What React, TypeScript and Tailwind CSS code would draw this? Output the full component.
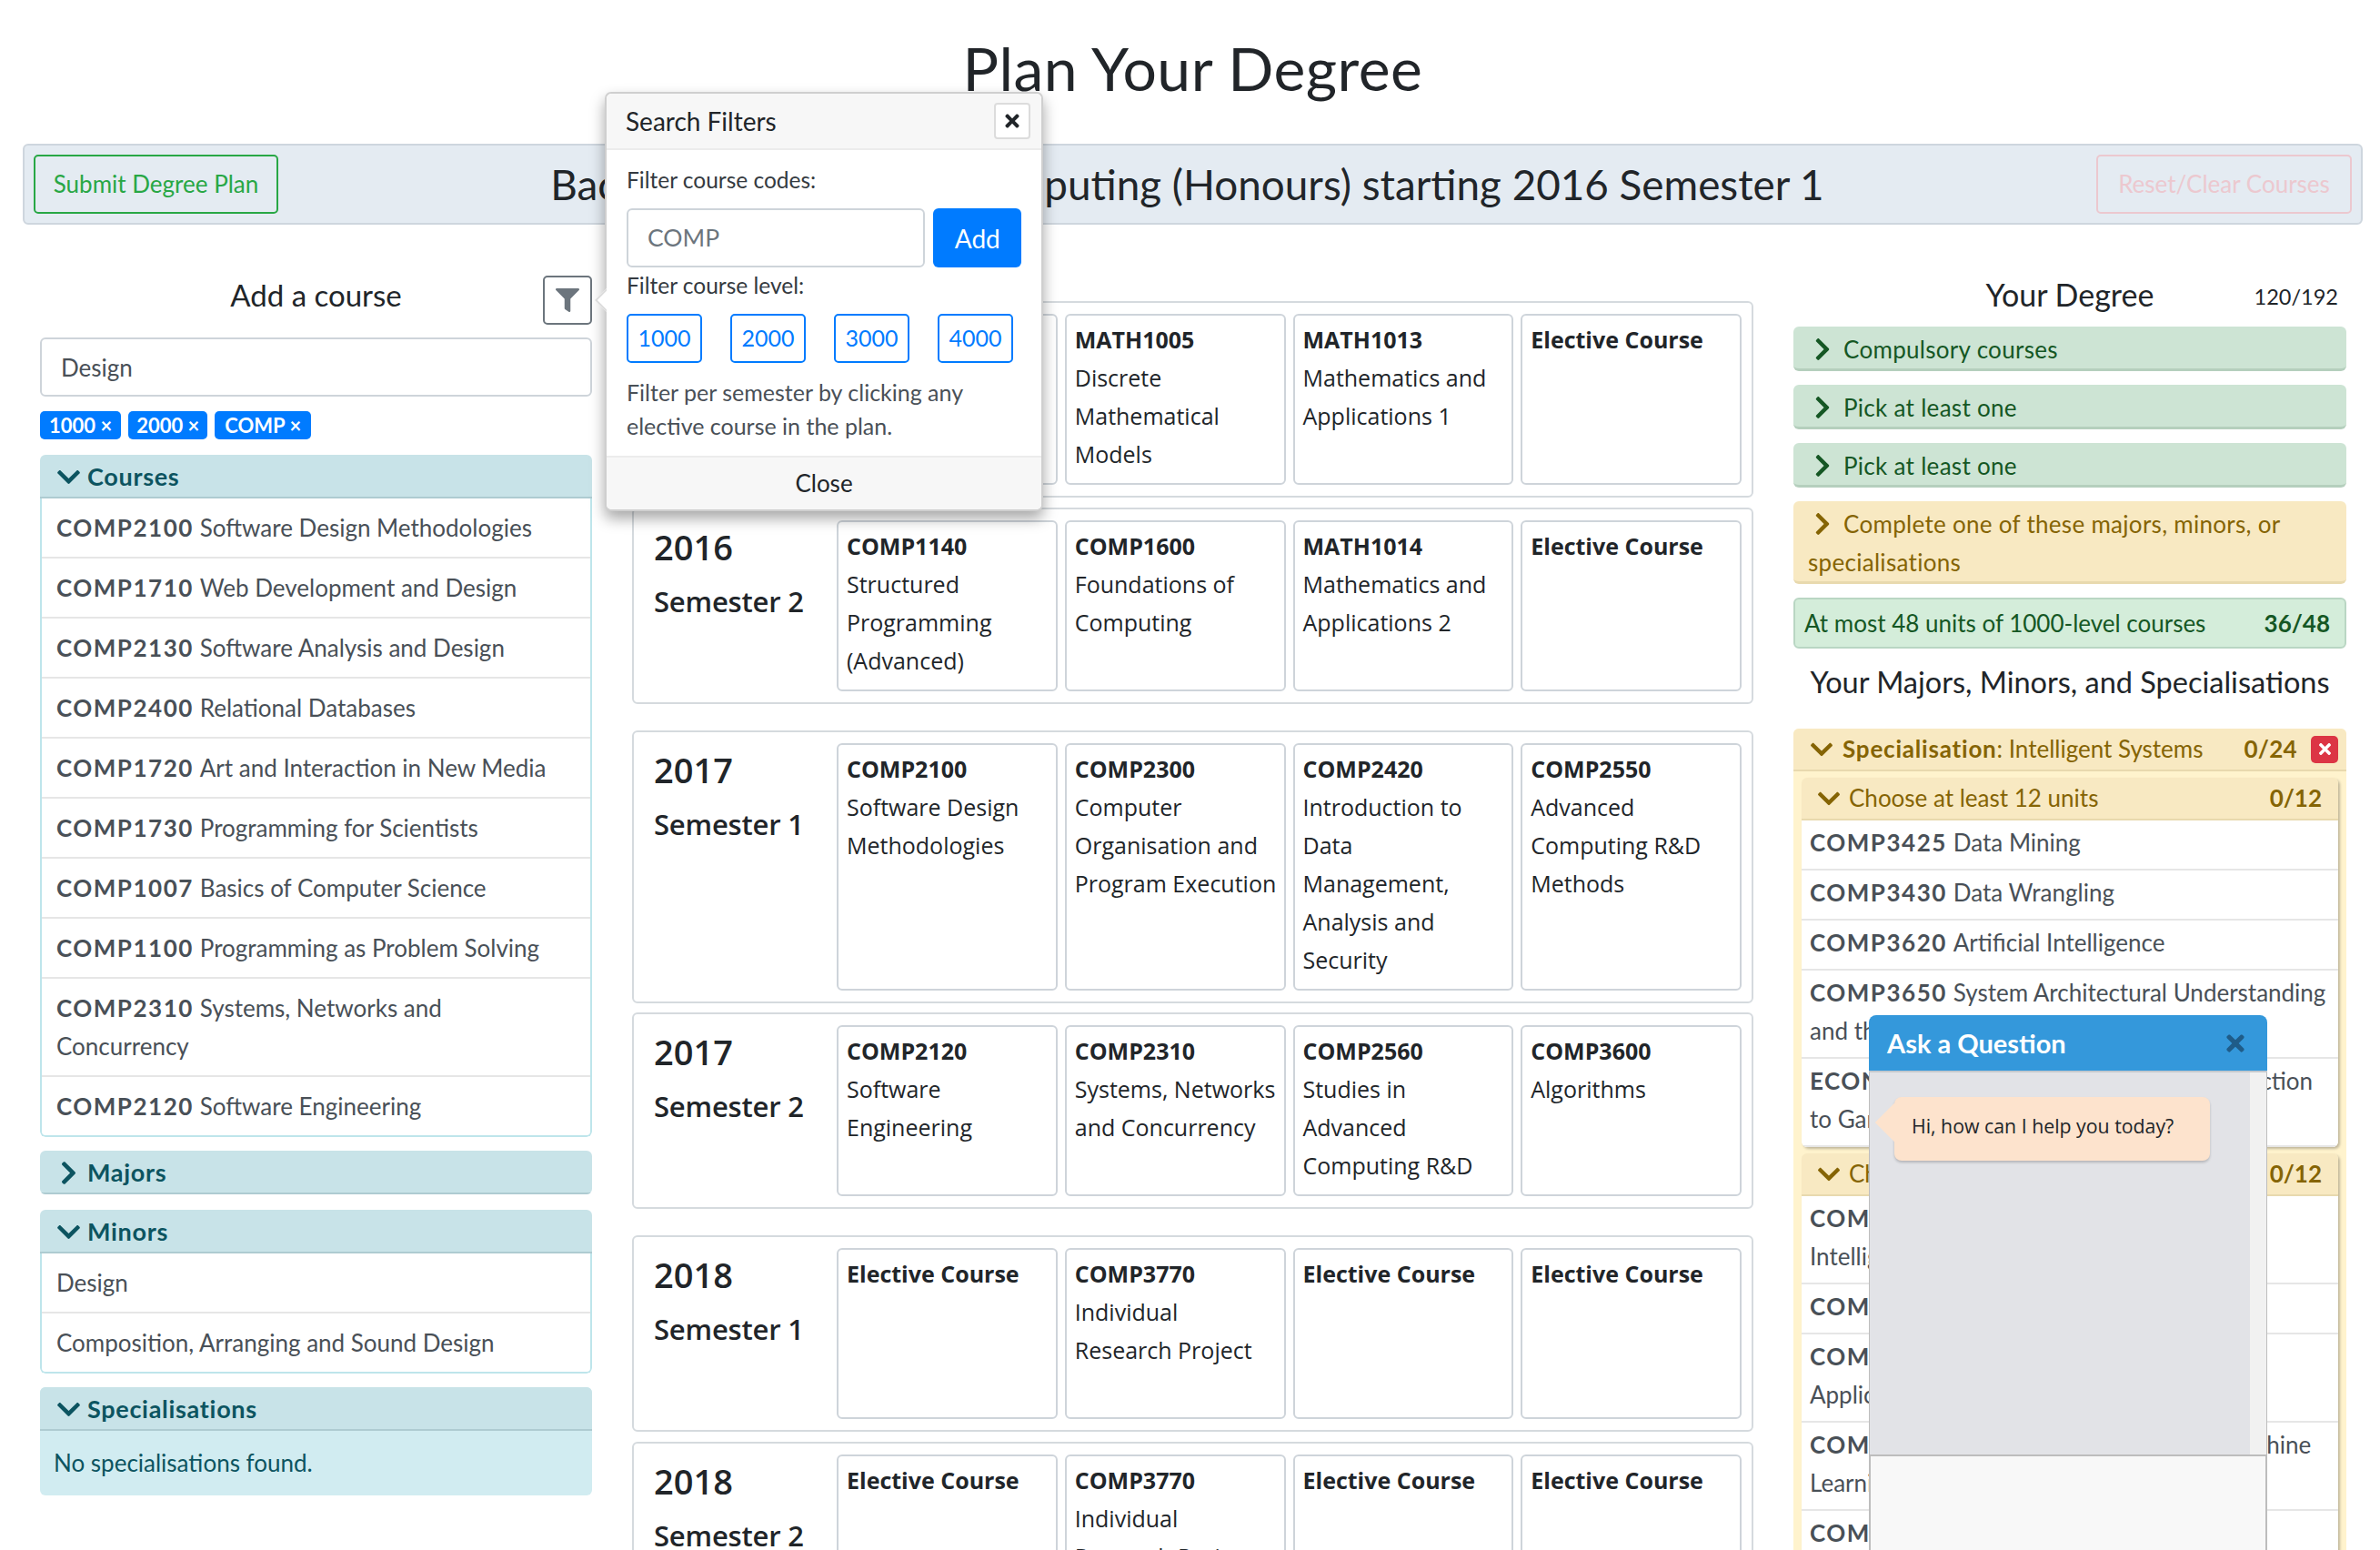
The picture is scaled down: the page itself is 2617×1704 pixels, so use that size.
import type { ReactNode } from "react";
import { FaChevronDown, FaChevronRight, FaFilter, FaTimes } from "react-icons/fa";

const courses: [string, string][] = [
  ["COMP2100", "Software Design Methodologies"],
  ["COMP1710", "Web Development and Design"],
  ["COMP2130", "Software Analysis and Design"],
  ["COMP2400", "Relational Databases"],
  ["COMP1720", "Art and Interaction in New Media"],
  ["COMP1730", "Programming for Scientists"],
  ["COMP1007", "Basics of Computer Science"],
  ["COMP1100", "Programming as Problem Solving"],
  ["COMP2310", "Systems, Networks and Concurrency"],
  ["COMP2120", "Software Engineering"],
];

const semesters: { year: string; sem: string; mb: string; tiles: [string, string?][] }[] = [
  { year: "2016", sem: "Semester 1", mb: "mb-[11px]", tiles: [["COMP1300", "Introduction to Software Systems"], ["MATH1005", "Discrete Mathematical Models"], ["MATH1013", "Mathematics and Applications 1"], ["Elective Course"]] },
  { year: "2016", sem: "Semester 2", mb: "mb-[29px]", tiles: [["COMP1140", "Structured Programming (Advanced)"], ["COMP1600", "Foundations of Computing"], ["MATH1014", "Mathematics and Applications 2"], ["Elective Course"]] },
  { year: "2017", sem: "Semester 1", mb: "mb-[10px]", tiles: [["COMP2100", "Software Design Methodologies"], ["COMP2300", "Computer Organisation and Program Execution"], ["COMP2420", "Introduction to\nData\nManagement,\nAnalysis and\nSecurity"], ["COMP2550", "Advanced Computing R&D Methods"]] },
  { year: "2017", sem: "Semester 2", mb: "mb-[29px]", tiles: [["COMP2120", "Software Engineering"], ["COMP2310", "Systems, Networks and Concurrency"], ["COMP2560", "Studies in\nAdvanced Computing R&D"], ["COMP3600", "Algorithms"]] },
  { year: "2018", sem: "Semester 1", mb: "mb-[11px]", tiles: [["Elective Course"], ["COMP3770", "Individual\nResearch Project"], ["Elective Course"], ["Elective Course"]] },
  { year: "2018", sem: "Semester 2", mb: "mb-[10px]", tiles: [["Elective Course"], ["COMP3770", "Individual\nResearch Project"], ["Elective Course"], ["Elective Course"]] },
];

function LeftHeader({ title, open }: { title: string; open?: boolean }) {
  return (
    <div className="flex h-[48px] items-center border-b-[2px] border-[#aecbd1] bg-[#c8e3e8] pl-[17px] pt-[2px] text-[27px] font-bold tracking-[0.7px] text-[#0c5460]">
      <span className="flex w-[35px] items-center">
        {open ? <FaChevronDown className="size-[29px]" /> : <FaChevronRight className="size-[29px]" />}
      </span>
      {title}
    </div>
  );
}

function LeftList({ items }: { items: [string, string][] }) {
  return (
    <ul className="rounded-b-[6px] border-x-[2px] border-b-[2px] border-[#bee5eb] bg-white">
      {items.map(([code, name], i) => (
        <li key={i} className="border-b-[2px] border-[#e6e6e6] px-[16px] py-[11px] text-[26px] leading-[42px] text-[#495057] last:border-b-0">
          {code && <b className="mr-[7px] tracking-[1.5px]">{code}</b>}
          {name}
        </li>
      ))}
    </ul>
  );
}

function Tile({ code, name }: { code: string; name?: string }) {
  return (
    <div className="min-h-[188px] whitespace-pre-line rounded-[6px] border-[2px] border-[#ced4da] bg-white pb-[11px] pl-[9px] pr-[2px] pt-[5px] text-[25px] leading-[42px] text-[#212529]">
      <div className="font-bold">{code}</div>
      {name && <div>{name}</div>}
    </div>
  );
}

function Semester({ year, sem, mb, tiles }: { year: string; sem: string; mb: string; tiles: [string, string?][] }) {
  return (
    <div className={`flex rounded-[6px] border-[2px] border-[#d5dade] bg-white py-[12px] pr-[11px] ${mb}`}>
      <div className="w-[223px] shrink-0 pl-[22px]">
        <div className="mt-[1px] text-[38px] font-semibold leading-[56px] text-[#212529]">{year}</div>
        <div className="mt-[4px] text-[31px] font-semibold leading-[56px] tracking-[-0.2px] text-[#212529]">{sem}</div>
      </div>
      <div className="grid flex-1 grid-cols-4 gap-x-[8px]">
        {tiles.map(([code, name], i) => (
          <Tile key={i} code={code} name={name} />
        ))}
      </div>
    </div>
  );
}

function ReqRow({ title, yellow }: { title: string; yellow?: boolean }) {
  const color = yellow
    ? "border-[#e8d9ae] bg-[#f8e9c2] text-[#856404]"
    : "border-[#b5cfbd] bg-[#cde4d4] text-[#155724]";
  return (
    <div className={`mb-[15px] rounded-[6px] border-b-[3px] pb-[0px] pl-[16px] pr-[16px] pt-[4px] text-[26px] leading-[42px] tracking-[0.3px] ${color}`}>
      <FaChevronRight className="mb-[7px] ml-[2px] mr-[9px] inline size-[28px]" />
      {title}
    </div>
  );
}

function RightItem({ code, name }: { code: string; name: ReactNode }) {
  return (
    <div className="border-b-[2px] border-[#e6e6e6] bg-white pb-[8px] pl-[9px] pr-[6px] pt-[3px] text-[26px] leading-[42px] text-[#495057]">
      <b className="mr-[7px] tracking-[1.5px]">{code}</b>
      {name}
    </div>
  );
}

function GroupHeader({ title, count }: { title: string; count: string }) {
  return (
    <div className="flex h-[47px] items-center justify-between border-b-[2px] border-[#e8d9ae] bg-[#f8e9c2] pl-[16px] pr-[18px] text-[26px] text-[#856404]">
      <span className="flex items-center">
        <FaChevronDown className="mr-[8px] size-[28px]" />
        {title}
      </span>
      <b>{count}</b>
    </div>
  );
}

export default function App() {
  return (
    <div className="relative h-[1704px] w-full overflow-hidden bg-white font-['Lato',sans-serif] text-[#212529]">
      <h1 className="flex h-[158px] justify-center pl-[6px] pt-[33px] text-[66px] leading-[84px] tracking-[0.5px] text-[#212529]">
        Plan Your Degree
      </h1>

      <div className="ml-[25px] mr-[19px] flex h-[89px] items-center justify-between rounded-[6px] border-[2px] border-[#ced6de] bg-[#e4ebf2] px-[10px]">
        <button className="h-[65px] w-[269px] rounded-[5px] border-[2px] border-[#28a745] text-[26px] text-[#28a745]">
          Submit Degree Plan
        </button>
        <div className="pt-[2px] text-[45.8px]">Bachelor of Advanced Computing (Honours) starting 2016 Semester 1</div>
        <button className="h-[65px] w-[281px] rounded-[5px] border-[2px] border-[#ecc8cf] text-[26px] text-[#ecc8cf]">
          Reset/Clear Courses
        </button>
      </div>

      <div className="mx-[44px] mt-[56px] flex gap-[44px]">
        {/* course search */}
        <div className="w-[607px] shrink-0">
          <div className="relative flex h-[53px] items-center justify-center text-[33px] leading-none">
            <span className="mt-[-10px]">Add a course</span>
            <button className="absolute right-0 top-0 flex h-[54px] w-[54px] items-center justify-center rounded-[5px] border-[2px] border-[#6c757d] bg-white text-[#6c757d]">
              <FaFilter className="size-[26px]" />
            </button>
          </div>
          <div className="mt-[15px] flex h-[65px] items-center rounded-[6px] border-[2px] border-[#ced4da] bg-white pl-[21px] pt-[2px] text-[26px] text-[#495057]">
            Design
          </div>
          <div className="mt-[16px] flex gap-[8px] text-[22px] font-bold leading-[31px] text-white">
            <span className="rounded-[5px] bg-[#007bff] px-[10px]">1000 ×</span>
            <span className="rounded-[5px] bg-[#007bff] px-[9px]">2000 ×</span>
            <span className="rounded-[5px] bg-[#007bff] px-[11px]">COMP ×</span>
          </div>

          <div className="mt-[17px] overflow-hidden rounded-[6px]">
            <LeftHeader title="Courses" open />
            <LeftList items={courses} />
          </div>
          <div className="mt-[15px] overflow-hidden rounded-[6px]">
            <LeftHeader title="Majors" />
          </div>
          <div className="mt-[17px] overflow-hidden rounded-[6px]">
            <LeftHeader title="Minors" open />
            <LeftList items={[["", "Design"], ["", "Composition, Arranging and Sound Design"]]} />
          </div>
          <div className="mt-[15px] overflow-hidden rounded-[6px] bg-[#d1ecf1]">
            <LeftHeader title="Specialisations" open />
            <div className="h-[71px] pl-[15px] pt-[14px] text-[26px] leading-[42px] text-[#0c5460]">No specialisations found.</div>
          </div>
        </div>

        {/* plan */}
        <div className="w-[1233px] shrink-0 pt-[28px] font-['Open_Sans',sans-serif]">
          {semesters.map((s, i) => (
            <Semester key={i} {...s} />
          ))}
        </div>

        {/* requirements */}
        <div className="w-[608px] shrink-0">
          <div className="relative flex h-[56px] items-center justify-center text-[34px] leading-none">
            <span className="mt-[-14px]">Your Degree</span>
            <span className="absolute right-[9px] top-[12px] text-[23.5px]">120/192</span>
          </div>
          <ReqRow title="Compulsory courses" />
          <ReqRow title="Pick at least one" />
          <ReqRow title="Pick at least one" />
          <ReqRow title="Complete one of these majors, minors, or specialisations" yellow />
          <div className="flex h-[56px] items-center justify-between rounded-[6px] border-[2px] border-[#b9d6c3] bg-[#d4edda] pl-[10px] pr-[16px] text-[26px] text-[#155724]">
            <span>At most 48 units of 1000-level courses</span>
            <b>36/48</b>
          </div>
          <div className="mb-[23px] mt-[9px] text-center text-[32.5px] leading-[56px]">Your Majors, Minors, and Specialisations</div>

          <div className="rounded-[6px] bg-[#fff3cd] px-[9px] pb-[40px]">
            <div className="-mx-[9px] flex h-[47px] items-center rounded-t-[6px] border-b-[2px] border-[#e8d9ae] bg-[#f8e9c2] pl-[17px] pr-[9px] text-[26px] text-[#856404]">
              <FaChevronDown className="mr-[9px] size-[28px]" />
              <span>
                <b className="tracking-[0.8px]">Specialisation</b>: Intelligent Systems
              </span>
              <b className="ml-auto mr-[15px] tracking-[0.3px]">0/24</b>
              <span className="flex h-[30px] w-[30px] items-center justify-center rounded-[5px] bg-[#dc3545] text-white">
                <FaTimes className="size-[19px]" />
              </span>
            </div>
            <div className="mt-[7px] overflow-hidden rounded-[6px] shadow-[2px_2px_3px_rgba(0,0,0,0.25)]">
              <GroupHeader title="Choose at least 12 units" count="0/12" />
              <RightItem code="COMP3425" name="Data Mining" />
              <RightItem code="COMP3430" name="Data Wrangling" />
              <RightItem code="COMP3620" name="Artificial Intelligence" />
              <RightItem code="COMP3650" name="System Architectural Understanding and the Web" />
              <RightItem code="ECON3101" name={<>Microeconomics 3: An Introduction<br />to Game Theory</>} />
            </div>
            <div className="mt-[7px] overflow-hidden rounded-[6px] shadow-[2px_2px_3px_rgba(0,0,0,0.25)]">
              <GroupHeader title="Choose at least 12 units" count="0/12" />
              <RightItem code="COMP4600" name={<>Advanced Topics in<br />Intelligent Systems</>} />
              <RightItem code="COMP4650" name="Document Analysis" />
              <RightItem code="COMP4660" name={<>Neural Networks<br />Applications</>} />
              <RightItem code="COMP4670" name={<>Introduction to Statistical Machine<br />Learning</>} />
              <RightItem code="COMP4680" name="Advanced Topics" />
            </div>
          </div>
        </div>
      </div>

      {/* filter popover */}
      <div className="absolute left-[665px] top-[101px] w-[482px] rounded-[7px] border-[2px] border-[#cfcfcf] bg-white shadow-[0_8px_16px_rgba(0,0,0,0.35)]">
        <div className="absolute -left-[14px] top-[210px] h-[34px] w-[14px] overflow-hidden">
          <div className="absolute left-[6px] top-[5px] h-[24px] w-[24px] rotate-45 border-[2px] border-[#dcdcdc] bg-white" />
        </div>
        <div className="flex h-[62px] items-center justify-between rounded-t-[6px] border-b-[2px] border-[#ececec] bg-[#f7f7f7] pl-[21px] pr-[12px] text-[28px]">
          <span>Search Filters</span>
          <button className="flex h-[40px] w-[40px] items-center justify-center rounded-[4px] border-[2px] border-[#dcdcdc] bg-white">
            <FaTimes className="size-[22px]" />
          </button>
        </div>
        <div className="px-[22px] text-[24.5px]">
          <div className="pt-[12px] leading-[42px] text-[#343a40]">Filter course codes:</div>
          <div className="mt-[10px] flex gap-[9px]">
            <div className="flex h-[65px] w-[330px] items-center rounded-[6px] border-[2px] border-[#ced4da] pl-[21px] text-[26.5px] text-[#6c757d]">COMP</div>
            <button className="h-[65px] w-[97px] rounded-[6px] bg-[#007bff] text-[28px] text-white">Add</button>
          </div>
          <div className="leading-[40px] text-[#343a40]">Filter course level:</div>
          <div className="mt-[11px] flex gap-[31px]">
            {["1000", "2000", "3000", "4000"].map((l) => (
              <button key={l} className="h-[54px] w-[83px] rounded-[5px] border-[2px] border-[#007bff] text-[25px] text-[#007bff]">{l}</button>
            ))}
          </div>
          <p className="mt-[14px] text-[25px] leading-[37px] text-[#495057]">Filter per semester by clicking any elective course in the plan.</p>
        </div>
        <div className="mt-[14px] flex h-[59px] items-center justify-center rounded-b-[6px] border-t-[2px] border-[#ececec] bg-[#f7f7f7] text-[26px]">Close</div>
      </div>

      {/* chat window */}
      <div className="absolute left-[2055px] top-[1116px] flex h-[600px] w-[438px] flex-col">
        <div className="flex h-[63px] items-center justify-between rounded-t-[8px] border-b-[2px] border-[#c4c9ce] bg-[#3498db] pl-[20px] pr-[21px] text-[29px] font-bold text-white">
          <span>Ask a Question</span>
          <FaTimes className="size-[28px] text-[#1f5c88]" />
        </div>
        <div className="relative flex h-[420px] border-x-[1px] border-[#bdbdbd] bg-[#e2e3e7]">
          <div className="relative ml-[27px] mt-[27px] h-[70px] w-[347px] rounded-[8px] bg-[#fde3cd] pl-[19px] font-['Open_Sans',sans-serif] text-[21.3px] leading-[64px] shadow-[0_2px_3px_rgba(0,0,0,0.2)]">
            <div className="absolute -left-[15px] top-[13px] h-[30px] w-[30px] rotate-45 bg-[#fde3cd]" />
            <span className="relative">Hi, how can I help you today?</span>
          </div>
          <div className="absolute right-0 top-0 h-full w-[18px] bg-[#f1f1f1]" />
        </div>
        <div className="flex-1 border-x-[2px] border-t-[2px] border-[#bdbdbd] bg-[#f8f8f8]" />
      </div>
    </div>
  );
}
